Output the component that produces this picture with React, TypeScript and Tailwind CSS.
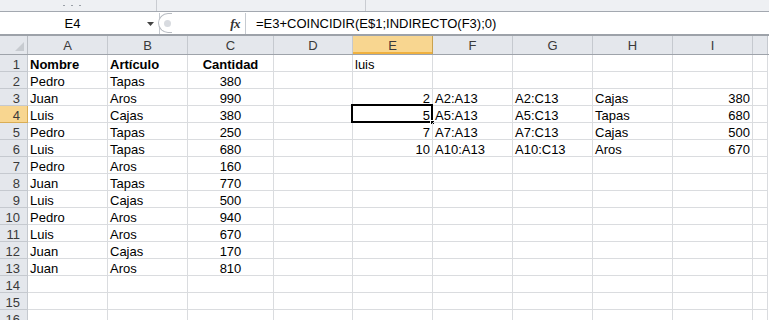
import React from 'react';

const cols = ['A', 'B', 'C', 'D', 'E', 'F', 'G', 'H', 'I', ''];
const widths = ['w-[80px]', 'w-[80px]', 'w-[86px]', 'w-[79px]', 'w-[80px]', 'w-[80px]', 'w-[80px]', 'w-[80px]', 'w-[80px]', 'w-[15px]'];

type Cell = { v: string; align?: 'l' | 'c' | 'r'; bold?: boolean };

const people: [string, string, string][] = [
  ['Pedro', 'Tapas', '380'],
  ['Juan', 'Aros', '990'],
  ['Luis', 'Cajas', '380'],
  ['Pedro', 'Tapas', '250'],
  ['Luis', 'Tapas', '680'],
  ['Pedro', 'Aros', '160'],
  ['Juan', 'Tapas', '770'],
  ['Luis', 'Cajas', '500'],
  ['Pedro', 'Aros', '940'],
  ['Luis', 'Aros', '670'],
  ['Juan', 'Cajas', '170'],
  ['Juan', 'Aros', '810'],
];

const lookup: Record<number, [string, string, string, string, string]> = {
  3: ['2', 'A2:A13', 'A2:C13', 'Cajas', '380'],
  4: ['5', 'A5:A13', 'A5:C13', 'Tapas', '680'],
  5: ['7', 'A7:A13', 'A7:C13', 'Cajas', '500'],
  6: ['10', 'A10:A13', 'A10:C13', 'Aros', '670'],
};

function rowCells(r: number): Cell[] {
  const cells: Cell[] = Array.from({ length: 10 }, () => ({ v: '' }));
  if (r === 1) {
    cells[0] = { v: 'Nombre', bold: true };
    cells[1] = { v: 'Artículo', bold: true };
    cells[2] = { v: 'Cantidad', bold: true, align: 'c' };
    cells[4] = { v: 'luis' };
  } else if (r <= 13) {
    const p = people[r - 2];
    cells[0] = { v: p[0] };
    cells[1] = { v: p[1] };
    cells[2] = { v: p[2], align: 'c' };
  }
  const l = lookup[r];
  if (l) {
    cells[4] = { v: l[0], align: 'r' };
    cells[5] = { v: l[1] };
    cells[6] = { v: l[2] };
    cells[7] = { v: l[3] };
    cells[8] = { v: l[4], align: 'r' };
  }
  return cells;
}

export default function App() {
  const rows = Array.from({ length: 16 }, (_, i) => i + 1);

  return (
    <div className="w-[774px] h-[320px] overflow-hidden bg-white font-['Liberation_Sans',Arial,sans-serif] text-[13px] text-black">
      <div className="w-[769px]">
        {/* ribbon bottom edge */}
        <div className="h-[12px] bg-[#eef0f3] flex border-b border-[#a3a8b0]">
          <div className="w-[157px] border-r border-[#c9ccd1] flex items-center gap-[6px] pl-[63px]">
            <span className="w-[2px] h-[1px] bg-[#9aa0a7]" />
            <span className="w-[2px] h-[1px] bg-[#9aa0a7]" />
            <span className="w-[2px] h-[1px] bg-[#9aa0a7]" />
          </div>
          <div className="w-[209px] border-r border-[#c9ccd1]" />
        </div>

        {/* formula bar */}
        <div className="h-[24px] flex border-t border-white border-b-2 border-b-[#9da2a9] bg-white">
          <div className="w-[160px] relative flex items-center justify-center border-r border-[#c6cad0]">
            <span className="ml-[-14px]">E4</span>
            <svg className="absolute right-[5px] top-[9px]" width="7" height="4" viewBox="0 0 7 4">
              <path d="M0 0h7L3.5 4z" fill="#444" />
            </svg>
          </div>
          <div className="w-[14px] relative">
            <div className="absolute left-[-2px] top-[0px] w-[14px] h-[20px] rounded-l-full border border-[#b8bcc2] border-r-0 bg-white flex items-center justify-center">
              <span className="w-[7px] h-[7px] rounded-full bg-[#d8dbe0] ml-[3px]" />
            </div>
          </div>
          <div className="w-[72px] flex items-center justify-end pr-[5px] border-r border-[#c6cad0]">
            <span className="font-['Liberation_Serif',serif] italic font-bold text-[13px] text-[#333] tracking-[-0.5px]">fx</span>
          </div>
          <div className="flex-1 flex items-center pl-[10px]">=E3+COINCIDIR(E$1;INDIRECTO(F3);0)</div>
        </div>

        {/* column headers */}
        <div className="flex h-[19px] border-b border-b-[#9ea3aa]">
          <div className="w-[28px] bg-[#e4e7ec] border-r border-[#b9bdc3] relative">
            <svg className="absolute right-[3px] bottom-[3px]" width="9" height="9" viewBox="0 0 9 9">
              <path d="M9 0V9H0z" fill="#c7cbd0" />
            </svg>
          </div>
          {cols.map((c, i) => (
            <div
              key={i}
              className={`${widths[i]} flex items-center justify-center pt-[2px] text-[#3a3a3a] ${
                c === 'E'
                  ? 'bg-[#f8d690] border-r border-[#c9a24f] shadow-[inset_0_-2px_0_#f0b13f]'
                  : 'bg-[#e4e7ec] border-r border-[#c5c9cf]'
              }`}
            >
              {c}
            </div>
          ))}
        </div>

        {/* rows */}
        {rows.map((r) => {
          const cells = rowCells(r);
          return (
            <div key={r} className="flex h-[17px]">
              <div
                className={`w-[28px] shrink-0 flex items-center justify-end pr-[7px] pt-[3px] text-[#3a3a3a] border-b border-r ${
                  r === 4 ? 'bg-[#f8d690] border-[#d9ad55]' : 'bg-[#e4e7ec] border-[#c5c9cf]'
                }`}
              >
                {r}
              </div>
              {cells.map((cell, i) => (
                <div
                  key={i}
                  className={`${widths[i]} shrink-0 relative flex items-center px-[2px] pt-[3px] border-r border-b border-[#dadcdf] whitespace-nowrap ${
                    cell.align === 'c' ? 'justify-center' : cell.align === 'r' ? 'justify-end' : 'justify-start'
                  } ${cell.bold ? 'font-bold' : ''}`}
                >
                  {cell.v}
                  {r === 4 && i === 4 && (
                    <div className="absolute left-[-2px] top-[-2px] right-[-1px] bottom-[-1px] border-2 border-black">
                      <span className="absolute right-[-4px] bottom-[-4px] w-[5px] h-[5px] bg-black border border-white" />
                    </div>
                  )}
                </div>
              ))}
            </div>
          );
        })}
      </div>
    </div>
  );
}
